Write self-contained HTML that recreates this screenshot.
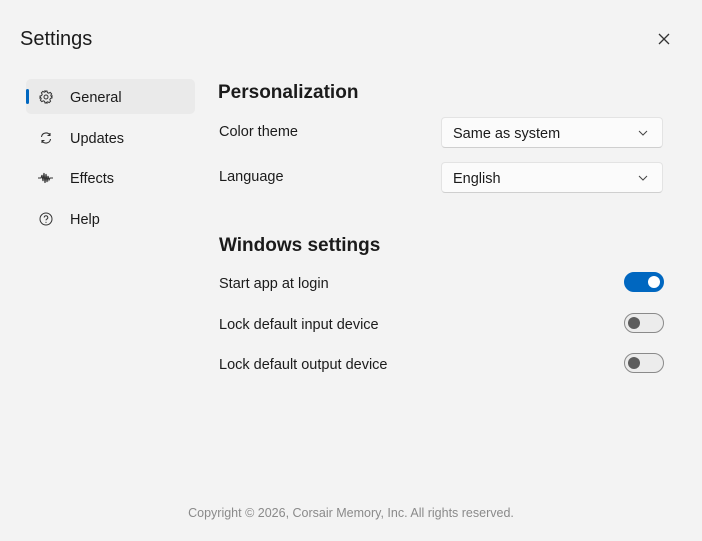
<!DOCTYPE html>
<html><head><style>
*{margin:0;padding:0;box-sizing:border-box}
body{width:702px;height:541px;background:#f3f3f3;font-family:"Liberation Sans",sans-serif;color:#1b1b1b;position:relative;overflow:hidden}
.a{position:absolute;white-space:nowrap}
.nav{font-size:14.5px}
.dd{position:absolute;left:441px;width:222px;height:31px;background:#fbfbfb;border:1px solid #e3e3e3;border-bottom-color:#cfcfcf;border-radius:4px;font-size:14.5px;padding:8px 0 0 11px}
.dd svg{position:absolute;right:14px;top:12px}
.tg{position:absolute;left:624px;width:40px;height:20px;border-radius:10px;border:1px solid #8a8a8a;background:#ececec}
.tg i{position:absolute;left:3px;top:3px;width:12px;height:12px;border-radius:50%;background:#5d5d5d}
.tg.on{background:#0067c0;border-color:#0067c0}
.tg.on i{left:23px;background:#fff}
.lbl{font-size:14.5px}
</style></head><body>
<div class="a" style="left:20px;top:28px;font-size:20px">Settings</div>
<svg class="a" style="left:658px;top:33px" width="12" height="12" viewBox="0 0 12 12"><path d="M1 1L11 11M11 1L1 11" stroke="#333" stroke-width="1.3"/></svg>

<div class="a" style="left:26px;top:79px;width:169px;height:35px;background:#eaeaea;border-radius:5px"></div>
<div class="a" style="left:26px;top:89px;width:3px;height:15px;background:#0067c0;border-radius:2px"></div>
<svg class="a" style="left:39px;top:90px" width="14" height="14" viewBox="0 0 14 14"><circle cx="7" cy="7" r="2" fill="none" stroke="#333" stroke-width="1"/><path d="M6 1h2l.4 1.6 1.3.6 1.5-.8 1.4 1.4-.8 1.5.6 1.3L13 6v2l-1.6.4-.6 1.3.8 1.5-1.4 1.4-1.5-.8-1.3.6L8 13H6l-.4-1.6-1.3-.6-1.5.8-1.4-1.4.8-1.5-.6-1.3L1 8V6l1.6-.4.6-1.3-.8-1.5 1.4-1.4 1.5.8 1.3-.6z" fill="none" stroke="#333" stroke-width="1"/></svg>
<div class="a nav" style="left:70px;top:90px">General</div>
<svg class="a" style="left:40px;top:131px" width="12" height="14" viewBox="0 0 12 14"><path d="M1.5 6A4.5 4.5 0 0 1 10 4.5M10 2v2.5H7.5M10.5 8A4.5 4.5 0 0 1 2 9.5M2 12V9.5h2.5" fill="none" stroke="#333" stroke-width="1.1"/></svg>
<div class="a nav" style="left:70px;top:131px">Updates</div>
<svg class="a" style="left:38px;top:172px" width="16" height="12" viewBox="0 0 16 12"><path d="M0 6h3l1-3 1 6 1-8 1 10 1-9 1 8 1-6 1 4 1-2h3" fill="none" stroke="#333" stroke-width="1.1"/></svg>
<div class="a nav" style="left:70px;top:171px">Effects</div>
<svg class="a" style="left:39px;top:212px" width="14" height="14" viewBox="0 0 14 14"><circle cx="7" cy="7" r="6" fill="none" stroke="#333" stroke-width="1"/><path d="M5.2 5.5A1.8 1.8 0 1 1 7.6 7.2c-.5.3-.6.6-.6 1.2" fill="none" stroke="#333" stroke-width="1"/><circle cx="7" cy="10.3" r=".6" fill="#333"/></svg>
<div class="a nav" style="left:70px;top:212px">Help</div>

<div class="a" style="left:218px;top:82px;font-size:19px;font-weight:600">Personalization</div>
<div class="a lbl" style="left:219px;top:124px">Color theme</div>
<div class="a lbl" style="left:219px;top:169px">Language</div>
<div class="dd" style="top:117px">Same as system<svg width="10" height="6" viewBox="0 0 10 6"><path d="M1 1l4 4 4-4" fill="none" stroke="#444"/></svg></div>
<div class="dd" style="top:162px">English<svg width="10" height="6" viewBox="0 0 10 6"><path d="M1 1l4 4 4-4" fill="none" stroke="#444"/></svg></div>

<div class="a" style="left:219px;top:235px;font-size:19px;font-weight:600">Windows settings</div>
<div class="a lbl" style="left:219px;top:276px">Start app at login</div>
<div class="a lbl" style="left:219px;top:317px">Lock default input device</div>
<div class="a lbl" style="left:219px;top:357px">Lock default output device</div>
<div class="tg on" style="top:272px"><i></i></div>
<div class="tg" style="top:313px"><i></i></div>
<div class="tg" style="top:353px"><i></i></div>

<div class="a" style="left:0;width:702px;text-align:center;top:506px;font-size:12.5px;color:#8a8a8a">Copyright © 2026, Corsair Memory, Inc. All rights reserved.</div>
</body></html>
